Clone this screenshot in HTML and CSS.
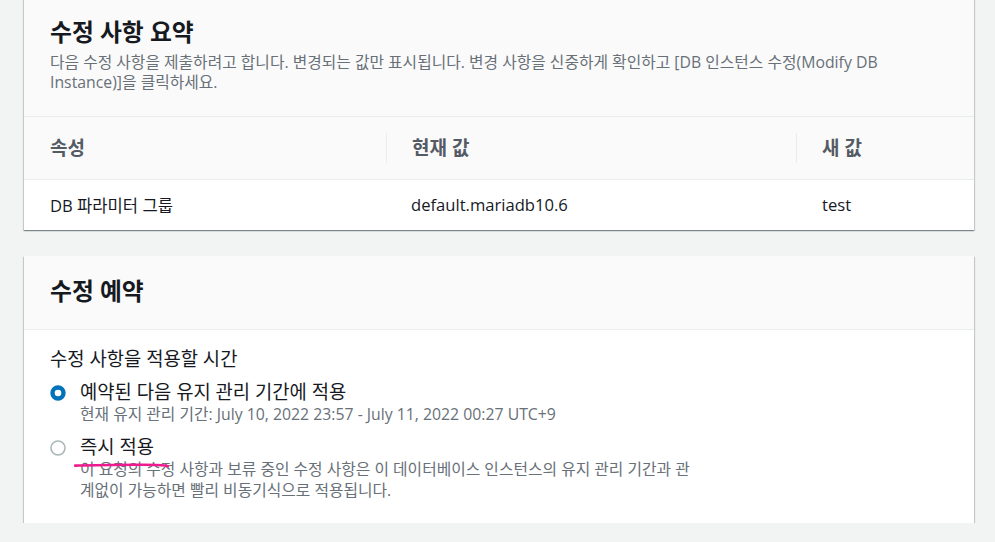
FILE: index.html
```html
<!DOCTYPE html>
<html lang="ko">
<head>
<meta charset="utf-8">
<title>DB 인스턴스 수정</title>
<link rel="stylesheet" href="styles.css">
</head>
<body>
<div class="page">
  <section class="card card-first">
    <header class="card-header">
      <h2 class="card-title">수정 사항 요약</h2>
      <p class="card-desc">다음 수정 사항을 제출하려고 합니다. 변경되는 값만 표시됩니다. 변경 사항을 신중하게 확인하고 [DB 인스턴스 수정(Modify DB Instance)]을 클릭하세요.</p>
    </header>
    <div class="table">
      <div class="th">속성</div>
      <div class="th sep">현재 값</div>
      <div class="th sep">새 값</div>
      <div class="td">DB 파라미터 그룹</div>
      <div class="td">default.mariadb10.6</div>
      <div class="td">test</div>
    </div>
  </section>

  <section class="card card-second">
    <header class="card-header">
      <h2 class="card-title">수정 예약</h2>
    </header>
    <div class="card-body">
      <div class="field-label">수정 사항을 적용할 시간</div>
      <div class="radio-group">
        <div class="radio-item">
          <svg class="radio" width="16" height="16" viewBox="0 0 16 16"><circle cx="8" cy="8" r="5.5" fill="#fff" stroke="#0073bb" stroke-width="4.4"/></svg>
          <div class="radio-text">
            <div class="radio-label">예약된 다음 유지 관리 기간에 적용</div>
            <div class="radio-desc">현재 유지 관리 기간: July 10, 2022 23:57 - July 11, 2022 00:27 UTC+9</div>
          </div>
        </div>
        <div class="radio-item second">
          <svg class="radio" width="16" height="16" viewBox="0 0 16 16"><circle cx="8" cy="8" r="7" fill="#fff" stroke="#aab7b8" stroke-width="1.6"/></svg>
          <div class="radio-text">
            <div class="radio-label">즉시 적용</div>
            <div class="radio-desc narrow">이 요청의 수정 사항과 보류 중인 수정 사항은 이 데이터베이스 인스턴스의 유지 관리 기간과 관계없이 가능하면 빨리 비동기식으로 적용됩니다.</div>
          </div>
          <svg class="annotation" width="96" height="8" viewBox="0 0 96 8"><path d="M1 3.6 C 20 3.2, 45 2.6, 70 2.8 S 90 3.6, 94 4.2" fill="none" stroke="#ee1a8f" stroke-width="2.6" stroke-linecap="round"/></svg>
        </div>
      </div>
    </div>
  </section>
</div>
</body>
</html>
```

FILE: styles.css
```css
html, body {
  margin: 0;
  padding: 0;
  background: #f2f3f3;
}
body {
  font-family: "Open Sans", "Noto Sans CJK KR", sans-serif;
  color: #16191f;
  overflow: hidden;
}
.page {
  padding: 0 21px 0 24px;
}
.card {
  background: #fff;
  box-shadow: 0 1px 1px 0 rgba(0, 28, 36, 0.3), 1px 1px 1px 0 rgba(0, 28, 36, 0.15), -1px 1px 1px 0 rgba(0, 28, 36, 0.15);
}
.card-first {
  margin-top: -3px;
}
.card-second {
  margin-top: 26px;
}
.card-header {
  background: #fafafa;
  padding: 21px 26px 24px;
  border-bottom: 1px solid #eaeded;
}
.card-title {
  margin: 0;
  font-size: 23.8px;
  line-height: 28px;
  font-weight: 700;
  color: #16191f;
}
.card-desc {
  margin: 6px 0 0;
  font-size: 15.8px;
  line-height: 20px;
  color: #687078;
  word-break: keep-all;
}
.table {
  display: grid;
  grid-template-columns: 362px 410px 1fr;
}
.th {
  position: relative;
  background: #fafafa;
  height: 63px;
  border-bottom: 1px solid #eaeded;
  display: flex;
  align-items: center;
  padding-left: 26px;
  padding-bottom: 3px;
  box-sizing: border-box;
  font-size: 19px;
  font-weight: 700;
  color: #545b64;
}
.th.sep::before {
  content: "";
  position: absolute;
  left: 0;
  top: 16px;
  height: 30px;
  border-left: 1px solid #eaeded;
}
.td {
  height: 50px;
  display: flex;
  align-items: center;
  padding-left: 26px;
  padding-bottom: 1px;
  box-sizing: border-box;
  font-size: 16.6px;
  color: #16191f;
}
.table .td:nth-child(5) {
  padding-left: 25px;
}
.card-body {
  padding: 17px 26px 22px;
}
.field-label {
  font-size: 18.8px;
  line-height: 24px;
  color: #16191f;
}
.radio-group {
  margin-top: 9px;
  display: flex;
  flex-direction: column;
  gap: 10px;
}
.radio-item {
  position: relative;
  display: flex;
  align-items: flex-start;
  gap: 14px;
}
.radio {
  flex: none;
  margin-top: 5px;
}
.radio-label {
  font-size: 18.8px;
  line-height: 24px;
  color: #16191f;
}
.radio-desc {
  font-size: 15.8px;
  line-height: 21px;
  color: #687078;
}
.radio-desc.narrow {
  max-width: 616px;
}
.annotation {
  position: absolute;
  left: 24px;
  top: 27px;
}
```
